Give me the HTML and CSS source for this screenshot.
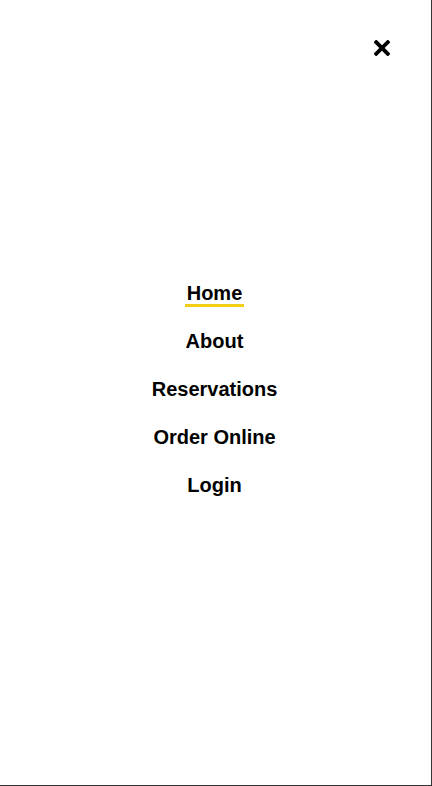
FILE: index.html
```
<!DOCTYPE html>
<html lang="en">
<head>
<meta charset="utf-8">
<title>Menu</title>
<link rel="stylesheet" href="styles.css">
</head>
<body>
<div class="panel">
  <header class="panel-header">
    <button class="close" aria-label="Close menu">
      <svg width="16" height="16" viewBox="0 0 16 16" aria-hidden="true">
        <path d="M2.2 2.2 L13.8 13.8 M13.8 2.2 L2.2 13.8" stroke="#000" stroke-width="3.8" stroke-linecap="square" fill="none"/>
      </svg>
    </button>
  </header>
  <nav class="nav">
    <ul class="nav-list">
      <li><a class="nav-link active" href="#">Home</a></li>
      <li><a class="nav-link" href="#">About</a></li>
      <li><a class="nav-link" href="#">Reservations</a></li>
      <li><a class="nav-link" href="#">Order Online</a></li>
      <li><a class="nav-link" href="#">Login</a></li>
    </ul>
  </nav>
</div>
</body>
</html>
```
FILE: styles.css
```
html, body {
  margin: 0;
  padding: 0;
  background: #fff;
}

body {
  font-family: "Liberation Sans", Arial, sans-serif;
  color: #000;
}

.panel {
  box-sizing: border-box;
  width: 432px;
  height: 786px;
  border-right: 1px solid #333;
  border-bottom: 1px solid #333;
}

.panel-header {
  display: flex;
  justify-content: flex-end;
  padding: 40px 41px 0 0;
}

.close {
  display: block;
  width: 16px;
  height: 16px;
  padding: 0;
  border: 0;
  background: none;
  cursor: pointer;
}

.close svg {
  display: block;
}

.nav {
  margin-top: 213px;
  padding-right: 2px;
}

.nav-list {
  list-style: none;
  margin: 0;
  padding: 0;
  text-align: center;
}

.nav-list li {
  font-size: 20px;
  font-weight: 700;
  line-height: 48px;
}

.nav-link {
  color: #000;
  text-decoration: none;
  padding: 0 2px;
}

.nav-link.active {
  border-bottom: 3px solid #f4ce14;
}
```
